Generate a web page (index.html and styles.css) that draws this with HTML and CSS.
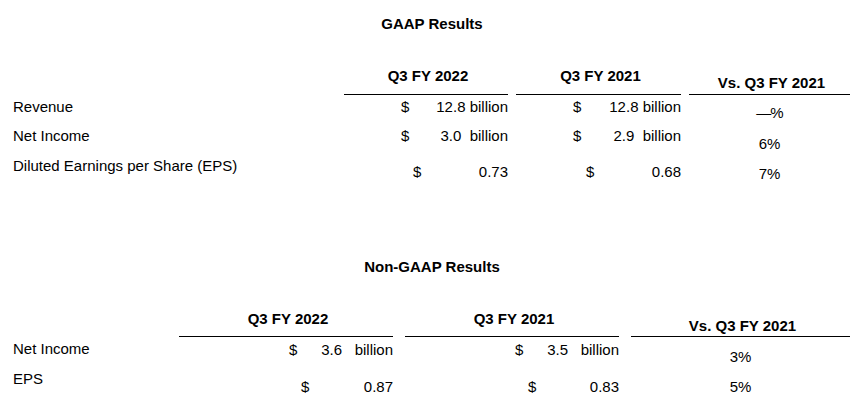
FILE: index.html
```html
<!DOCTYPE html>
<html lang="en">
<head>
<meta charset="utf-8">
<title>Q3 FY 2022 Results</title>
<link rel="stylesheet" href="styles.css">
</head>
<body>
<main class="report">
  <section class="block block-gaap">
    <h2 class="title">GAAP Results</h2>
    <div class="table table-gaap">
      <div class="corner"></div>
      <div class="head">Q3 FY 2022</div>
      <div class="head">Q3 FY 2021</div>
      <div class="head head-vs">Vs. Q3 FY 2021</div>

      <div class="label">Revenue</div>
      <div class="amt"><span class="cur">$</span><span class="num">12.8 billion</span></div>
      <div class="amt"><span class="cur">$</span><span class="num">12.8 billion</span></div>
      <div class="vs vs-first">—%</div>

      <div class="label label-tight">Net Income</div>
      <div class="amt amt-tight"><span class="cur">$</span><span class="num">3.0  billion</span></div>
      <div class="amt amt-tight"><span class="cur">$</span><span class="num">2.9  billion</span></div>
      <div class="vs">6%</div>

      <div class="label label-tight">Diluted Earnings per Share (EPS)</div>
      <div class="amt amt-eps"><span class="cur">$</span><span class="num">0.73</span></div>
      <div class="amt amt-eps amt-eps-b"><span class="cur">$</span><span class="num">0.68</span></div>
      <div class="vs">7%</div>
    </div>
  </section>

  <section class="block block-non">
    <h2 class="title">Non-GAAP Results</h2>
    <div class="table table-non">
      <div class="corner"></div>
      <div class="head">Q3 FY 2022</div>
      <div class="head">Q3 FY 2021</div>
      <div class="head head-vs">Vs. Q3 FY 2021</div>

      <div class="label">Net Income</div>
      <div class="amt amt-wide"><span class="cur">$</span><span class="num">3.6   billion</span></div>
      <div class="amt amt-wide"><span class="cur">$</span><span class="num">3.5   billion</span></div>
      <div class="vs">3%</div>

      <div class="label">EPS</div>
      <div class="amt amt-wide amt-eps"><span class="cur">$</span><span class="num">0.87</span></div>
      <div class="amt amt-wide amt-eps amt-eps-b"><span class="cur">$</span><span class="num">0.83</span></div>
      <div class="vs">5%</div>
    </div>
  </section>
</main>
</body>
</html>
```

FILE: styles.css
```css
html, body {
  margin: 0;
  padding: 0;
  background: #ffffff;
}

body {
  font-family: "Liberation Sans", Arial, sans-serif;
  font-size: 15px;
  line-height: 17px;
  color: #000000;
}

.report {
  width: 864px;
}

.title {
  margin: 0;
  font-size: 15px;
  line-height: 17px;
  font-weight: bold;
  text-align: center;
}

.block-gaap {
  padding-top: 15px;
}

.block-non {
  padding-top: 73px;
}

.table {
  display: grid;
  margin-left: 13px;
}

.table-gaap {
  column-gap: 8px;
  grid-template-columns: 323px 164px 165px 161px;
  grid-template-rows: 63px 30px 30px 30px;
}

.table-non {
  column-gap: 12px;
  grid-template-columns: 154px 214px 214px 219px;
  grid-template-rows: 62px 30px 30px;
}

.head {
  display: flex;
  align-items: flex-end;
  justify-content: center;
  padding: 0 0 10px 4px;
  border-bottom: 1px solid #000000;
  font-weight: bold;
  white-space: nowrap;
}

.head-vs {
  padding-bottom: 3px;
}

.table-non .head {
  padding-bottom: 9px;
}

.table-non .head-vs {
  padding-bottom: 2px;
}

.label {
  padding-top: 3px;
  white-space: nowrap;
}

.label-tight {
  padding-top: 2px;
}

.amt {
  display: flex;
  padding-top: 3px;
}

.amt-tight {
  padding-top: 2px;
}

.cur {
  margin-left: 57px;
}

.amt-eps {
  padding-top: 8px;
}

.amt-eps .cur {
  margin-left: 69px;
}

.amt-eps-b .cur {
  margin-left: 70px;
}

.num {
  margin-left: auto;
  white-space: pre;
}

.amt-wide {
  padding-top: 4px;
}

.amt-wide .cur {
  margin-left: 110px;
}

.amt-wide.amt-eps {
  padding-top: 11px;
}

.amt-wide.amt-eps .cur {
  margin-left: 122px;
}

.amt-wide.amt-eps-b .cur {
  margin-left: 123px;
}

.vs {
  text-align: center;
  padding-top: 10px;
}

.vs-first {
  padding-top: 9px;
  letter-spacing: -1px;
}

.table-non .vs {
  padding-top: 11px;
}
```
